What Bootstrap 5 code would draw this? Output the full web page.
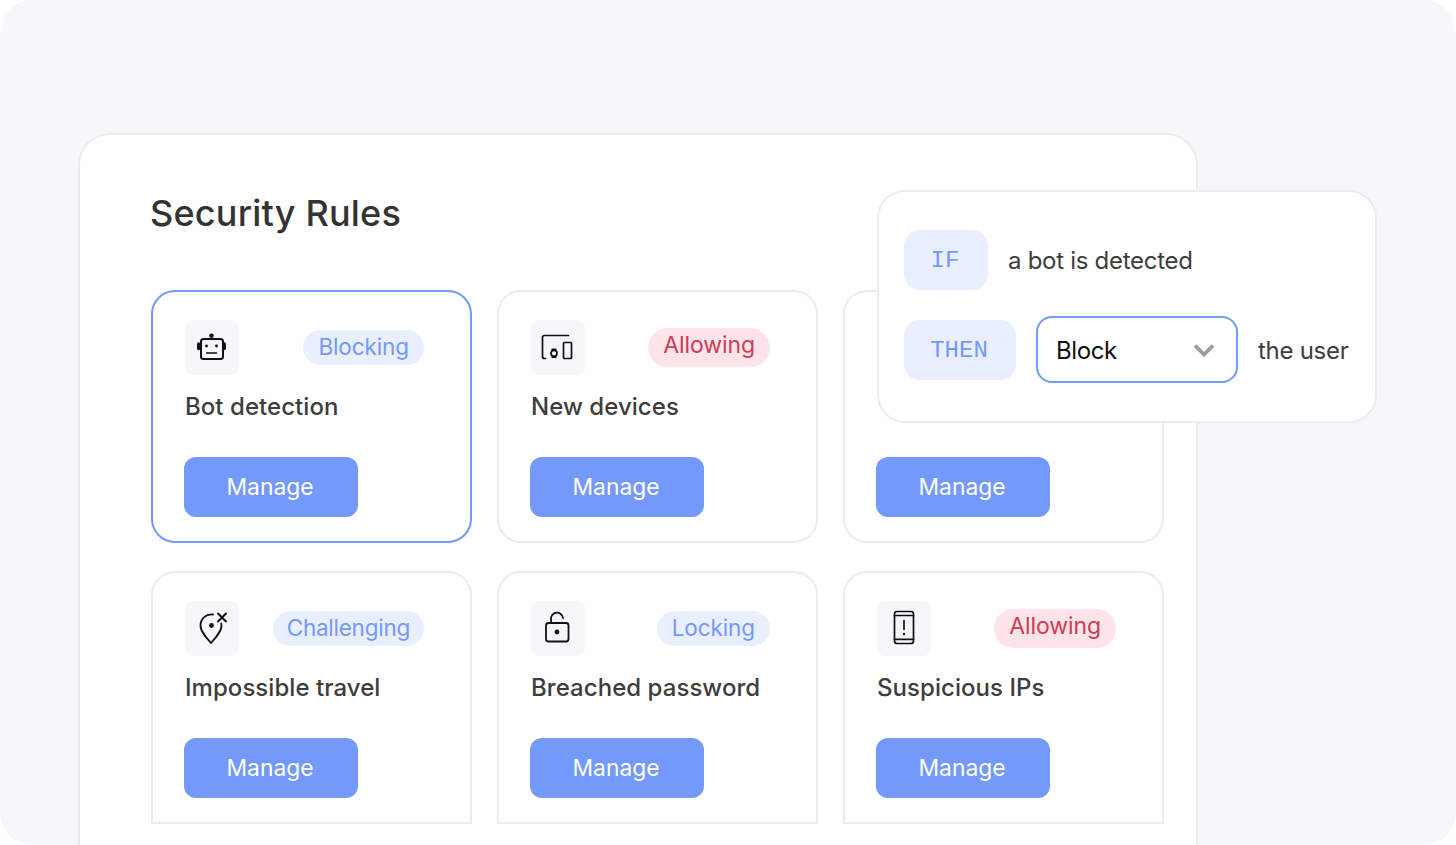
<!doctype html>
<html lang="en">
<head>
<meta charset="utf-8">
<title>Security Rules</title>
<link href="https://cdn.jsdelivr.net/npm/bootstrap@5.3.0/dist/css/bootstrap.min.css" rel="stylesheet">
<style>
html,body{margin:0;background:#fff;overflow:hidden}
body{font-family:"Inter","Liberation Sans",sans-serif;color:#3d3d3d}
.stage{position:relative;width:1456px;height:845px;background:#f5f7fb;border-radius:32px;overflow:hidden;padding:133px 0 0 78px}
.panel{width:1120px;height:712px;background:#fff;border:2px solid #ececf0;border-bottom:0;border-radius:32px 32px 0 0;padding:56px 0 0 71px}
.panel-title{font-size:36px;line-height:44px;font-weight:500;color:#333;margin:0 0 55px -1px;letter-spacing:.2px}
.rules{display:grid;grid-template-columns:repeat(3,321px);gap:28px 25px}
.rule{height:253px;border:2px solid #ececf0;border-radius:24px;padding:28px 46px 24px 31px;background:#fff}
.rules>.rule:nth-child(n+4){border-radius:24px 24px 0 0}
.rule.active{border-color:#7399fb}
.rule-head{height:55px;display:flex;align-items:center;justify-content:space-between}
.ico{width:54px;height:55px;margin-left:1px;background:#f5f7fb;border-radius:8px;display:block;flex:none}
.ico svg{display:block}
.pill{font-size:22.5px;line-height:33px;height:35px;padding:0 15px;border-radius:18px;background:#e9effe;color:#7399fb;letter-spacing:-.1px}
.pill.snug{padding:0 14px;letter-spacing:-.25px}
.pill.red{background:#fee4e8;color:#cc3d56;line-height:35px;height:39px;font-size:23px;border-radius:20px}
.rule-name{font-size:24px;line-height:32px;font-weight:500;margin:16px 0 34px 1px;letter-spacing:.05px;color:#3d3d3d}
.btn.manage{display:block;width:174px;height:60px;background:#7399fb;border:0;border-radius:12px;color:#fff;font-size:22.8px;line-height:58px;padding:0 2px 1px 0}
.popover-card{position:absolute;left:877px;top:190px;width:500px;height:233px;background:#fff;border:2px solid #ececf0;border-radius:28px;padding:0 0 0 25px}
.cond{display:flex;align-items:center;gap:20px;font-size:24px;color:#3d3d3d;letter-spacing:-.28px}
.cond.one{margin-top:38px;height:60px}
.cond.two{margin-top:26px;height:67px}
.cond-text{padding-top:2px}
.tag{display:flex;align-items:center;justify-content:center;height:60px;background:#e9effe;color:#7399fb;border-radius:16px;font-family:"Liberation Mono",monospace;font-size:24px;letter-spacing:0;padding:2px 2px 0 0}
.tag.t-if{width:84px}
.tag.t-then{width:112px}
.form-select.choice{width:202px;height:67px;border:2px solid #7399fb;border-radius:16px;box-shadow:none;font-size:24px;color:#111;padding:2px 0 0 18px;letter-spacing:-.4px;font-family:inherit;background-position:right 21px center;background-size:22px 14px;background-image:url("data:image/svg+xml,%3csvg xmlns='http://www.w3.org/2000/svg' viewBox='0 0 22 14'%3e%3cpath fill='none' stroke='%23999aa3' stroke-width='3.8' d='M2 2.5l9 9 9-9'/%3e%3c/svg%3e")}
</style>
</head>
<body>
<div class="stage">
  <div class="panel">
    <h1 class="panel-title">Security Rules</h1>
    <div class="rules">
      <div class="rule active">
        <div class="rule-head">
          <span class="ico"><svg width="54" height="54" viewBox="0 0 54 54" fill="none" stroke="#111" stroke-width="2"><rect x="16" y="19" width="22" height="20" rx="2.500"/><path d="M13.700 24v4.500M39.300 24v4.500" stroke-width="3.400" stroke-linecap="round"/><circle cx="26.500" cy="15.800" r="2.300" fill="#111" stroke="none"/><circle cx="21.500" cy="26" r="1.400" fill="#111" stroke="none"/><circle cx="31.500" cy="26" r="1.400" fill="#111" stroke="none"/><path d="M21 33h11" stroke-width="1.500"/></svg></span>
          <span class="pill">Blocking</span>
        </div>
        <p class="rule-name">Bot detection</p>
        <button class="btn manage" type="button">Manage</button>
      </div>
      <div class="rule">
        <div class="rule-head">
          <span class="ico"><svg width="54" height="54" viewBox="0 0 54 54" fill="none" stroke="#111" stroke-width="1.700" stroke-linecap="round"><path d="M37.500 15.500H13.500a2 2 0 0 0-2 2V36.500a2 2 0 0 0 2 2h1"/><rect x="32.500" y="22.500" width="8" height="16" rx=".8"/><circle cx="23" cy="33.300" r="3"/><path d="M21.300 29.500h3.400M21.300 37.100h3.400" stroke-width="2"/></svg></span>
          <span class="pill red">Allowing</span>
        </div>
        <p class="rule-name">New devices</p>
        <button class="btn manage" type="button">Manage</button>
      </div>
      <div class="rule">
        <div class="rule-head"></div>
        <p class="rule-name">&nbsp;</p>
        <button class="btn manage" type="button">Manage</button>
      </div>
      <div class="rule">
        <div class="rule-head">
          <span class="ico"><svg width="54" height="54" viewBox="0 0 54 54" fill="none" stroke="#111" stroke-width="1.800" stroke-linecap="round" stroke-linejoin="round"><path d="M28 13.500C21 12.500 15.500 18 15.500 24.500c0 6 5.500 12 10.500 17.500C31 36.500 36.500 30.500 36.500 24.500c0-1-.1-1.500-.3-2.200"/><circle cx="26.500" cy="24.500" r="2.400" fill="#111" stroke="none"/><path d="M33 12.500l8 8M41 12.500l-8 8" stroke-width="2"/></svg></span>
          <span class="pill snug">Challenging</span>
        </div>
        <p class="rule-name">Impossible travel</p>
        <button class="btn manage" type="button">Manage</button>
      </div>
      <div class="rule">
        <div class="rule-head">
          <span class="ico"><svg width="54" height="54" viewBox="0 0 54 54" fill="none" stroke="#111" stroke-width="1.800" stroke-linecap="round"><rect x="15" y="22" width="22.500" height="18.500" rx="2.500"/><path d="M20 21v-2.500a6 6 0 0 1 12-1.500"/><circle cx="26" cy="31" r="2.400" fill="#111" stroke="none"/></svg></span>
          <span class="pill">Locking</span>
        </div>
        <p class="rule-name">Breached password</p>
        <button class="btn manage" type="button">Manage</button>
      </div>
      <div class="rule">
        <div class="rule-head">
          <span class="ico"><svg width="54" height="54" viewBox="0 0 54 54" fill="none" stroke="#111" stroke-width="1.700" stroke-linecap="round"><rect x="17.500" y="10.500" width="19" height="32" rx="2.500"/><path d="M17.500 14.500h19M17.500 38.300h19"/><path d="M27 19.500v8.800"/><circle cx="27" cy="33" r="1.200" fill="#111" stroke="none"/></svg></span>
          <span class="pill red">Allowing</span>
        </div>
        <p class="rule-name">Suspicious IPs</p>
        <button class="btn manage" type="button">Manage</button>
      </div>
    </div>
  </div>
  <div class="popover-card">
    <div class="cond one"><span class="tag t-if">IF</span><span class="cond-text">a bot is detected</span></div>
    <div class="cond two"><span class="tag t-then">THEN</span>
      <select class="form-select choice" aria-label="Action"><option>Block</option></select>
      <span class="cond-text">the user</span></div>
  </div>
</div>
<script src="https://cdn.jsdelivr.net/npm/bootstrap@5.3.0/dist/js/bootstrap.bundle.min.js"></script>
</body>
</html>
